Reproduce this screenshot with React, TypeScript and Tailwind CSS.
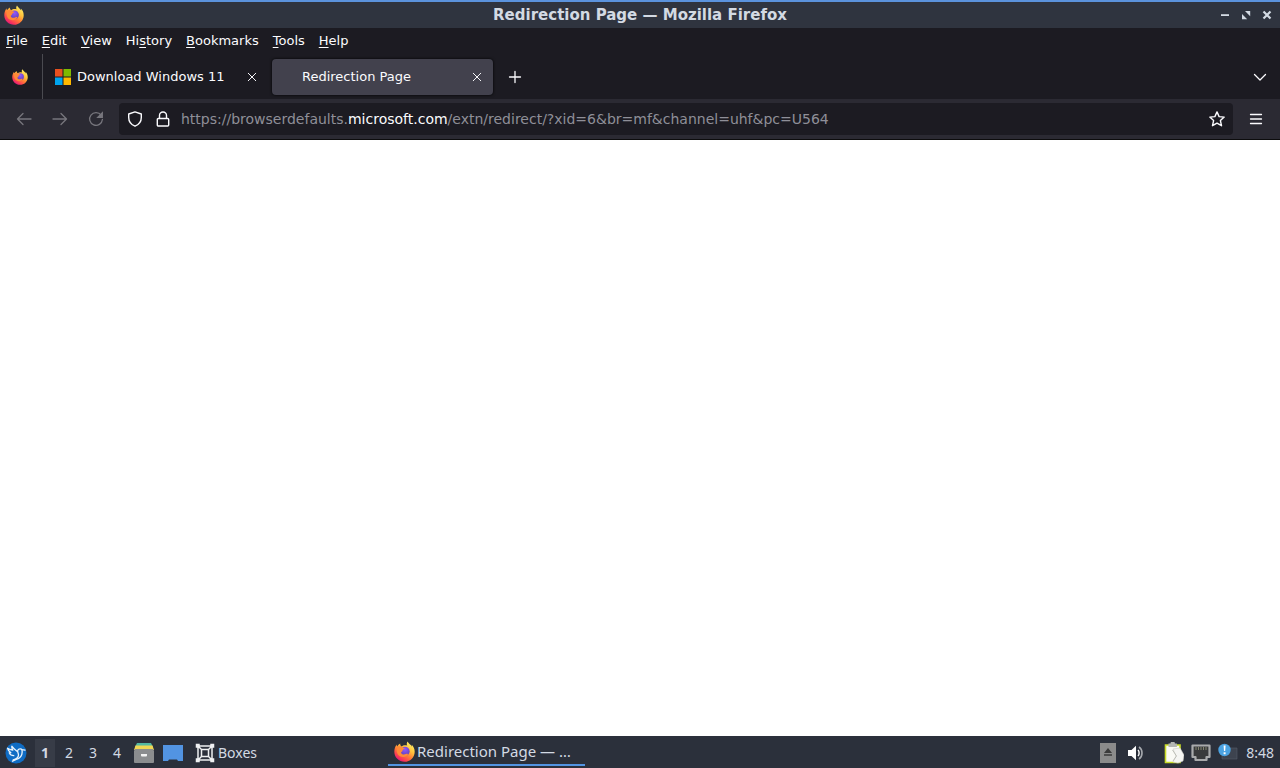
import React from 'react';

function FirefoxLogo({ className, id }: { className: string; id: string }) {
  return (
    <svg viewBox="0 0 20 20" className={className} aria-hidden="true">
      <defs>
        <linearGradient id={`${id}-flame`} x1="0.85" y1="0.05" x2="0.25" y2="0.95">
          <stop offset="0" stopColor="#fff36b" />
          <stop offset="0.35" stopColor="#ffc23c" />
          <stop offset="0.62" stopColor="#ff7a35" />
          <stop offset="0.85" stopColor="#fa3c55" />
          <stop offset="1" stopColor="#e3187a" />
        </linearGradient>
        <radialGradient id={`${id}-globe`} cx="0.5" cy="0.3" r="0.8">
          <stop offset="0" stopColor="#9059ff" />
          <stop offset="1" stopColor="#5b3cab" />
        </radialGradient>
      </defs>
      <path
        d="M13 0.4c-.9 1.3-1.1 2.7-.4 3.9C10 3.8 8.500 4.200 7.300 5.200 6.300 4.700 5.800 3.600 5.900 2.400 4.700 3.100 3.700 4 3 5.200 2.600 4.700 2.500 4 2.600 3.300 1.100 5 .3 7.800.3 10.300.3 15.700 4.700 19.800 10 19.800s9.700-4.200 9.700-9.600c0-3-1.200-5.300-2.900-6.700.3.8.4 1.400.4 2C16.200 3.300 13.800 2.500 13 .4Z"
        fill={`url(#${id}-flame)`}
      />
      <circle cx="10.500" cy="9.800" r="4.400" fill={`url(#${id}-globe)`} />
      <path
        d="M2.800 6.200c1.200-1.200 3-1.300 4.300-.8 1.200.3 1.600 1.200 3.200 1.300.2.900-1.600 1.200-2.100 2.100-.2 1.100-.7 1.600-1.600 2.100.6 1.900 2.700 2.400 4.600 1.500 1-.4 1.800-.4 2.200.2-1.100 2.200-4.200 3.300-7 2.200C3.200 13.600 2 10 2.800 6.200Z"
        fill="#ff8a38"
      />
    </svg>
  );
}

function MicrosoftLogo() {
  return (
    <svg viewBox="0 0 16 16" className="size-4" aria-hidden="true">
      <path fill="#e8501f" d="M0 0h7.500v7.500H0z" />
      <path fill="#7fba00" d="M8.500 0H16v7.500H8.500z" />
      <path fill="#00a4ef" d="M0 8.500h7.500V16H0z" />
      <path fill="#ffb900" d="M8.500 8.500H16V16H8.500z" />
    </svg>
  );
}

function Stroke({
  d,
  className,
  width = 1.3,
}: {
  d: string;
  className: string;
  width?: number;
}) {
  return (
    <svg
      viewBox="0 0 16 16"
      className={className}
      fill="none"
      stroke="currentColor"
      strokeWidth={width}
      strokeLinecap="round"
      strokeLinejoin="round"
      aria-hidden="true"
    >
      <path d={d} />
    </svg>
  );
}

const menus = [
  ['', 'F', 'ile'],
  ['', 'E', 'dit'],
  ['', 'V', 'iew'],
  ['Hi', 's', 'tory'],
  ['', 'B', 'ookmarks'],
  ['', 'T', 'ools'],
  ['', 'H', 'elp'],
];

function TitleBar() {
  return (
    <header className="grid h-7 grid-cols-[1fr_auto_1fr] items-center border-t-2 border-[#5b93dd] bg-[#2f343f] text-[#d3dae3]">
      <FirefoxLogo id="title" className="ml-1 size-5" />
      <h1 className="text-[15px] leading-6 font-bold">Redirection Page — Mozilla Firefox</h1>
      <div className="flex items-center justify-end gap-[9px] pr-[7px]">
        <button aria-label="Minimize" className="size-3">
          <svg viewBox="0 0 12 12" className="size-3">
            <path d="M2 5.200h8v1.800H2z" fill="currentColor" />
          </svg>
        </button>
        <button aria-label="Restore" className="size-3">
          <svg viewBox="0 0 12 12" className="size-3" fill="currentColor">
            <path d="M5 2h5.200v5.200zM2 5v5.200h5.200z" />
          </svg>
        </button>
        <button aria-label="Close" className="size-3">
          <svg viewBox="0 0 12 12" className="size-3">
            <path d="m2.500 2.500 7 7m0-7-7 7" stroke="currentColor" strokeWidth="2.200" />
          </svg>
        </button>
      </div>
    </header>
  );
}

function MenuBar() {
  return (
    <nav className="flex h-[26px] items-center gap-3.5 px-1.5 text-[13px] leading-5">
      {menus.map(([before, key, after]) => (
        <button key={before + key + after}>
          {before}
          <span className="underline underline-offset-2">{key}</span>
          {after}
        </button>
      ))}
    </nav>
  );
}

function TabStrip() {
  return (
    <div className="flex h-[45px] items-center text-[13px] leading-5" role="tablist">
      <button
        role="tab"
        aria-label="Pinned tab"
        className="flex h-full w-[43px] items-center justify-center border-r border-[#4a4a50] pr-0.5"
      >
        <FirefoxLogo id="pinned" className="size-4" />
      </button>
      <div className="flex h-9 w-[229px] items-center pr-3.5 pl-3">
        <button role="tab" className="flex flex-1 items-center gap-1.5">
          <MicrosoftLogo />
          Download Windows 11
        </button>
        <button aria-label="Close Download Windows 11">
          <Stroke className="size-3" d="m3 3 10 10M13 3 3 13" />
        </button>
      </div>
      <div className="flex h-9 w-[221px] items-center rounded-sm bg-[#42414d] pr-2.5 pl-[30px] shadow-[0_0_3px_#000]">
        <button role="tab" aria-selected="true" className="flex-1 text-left">
          Redirection Page
        </button>
        <button aria-label="Close Redirection Page">
          <Stroke className="size-3" d="m3 3 10 10M13 3 3 13" />
        </button>
      </div>
      <button aria-label="New tab" className="ml-3.5">
        <Stroke className="size-4" d="M8 2.500v11M2.500 8h11" />
      </button>
      <button aria-label="List all tabs" className="mr-3 ml-auto">
        <Stroke className="size-4" d="m2.500 5.500 5.500 5.500 5.500-5.500" />
      </button>
    </div>
  );
}

function NavBar() {
  return (
    <div className="flex h-[41px] items-center border-b border-b-[#0c0c0d] bg-[#2b2a33] pl-4 text-[#fbfbfe]">
      <div className="flex gap-5 text-[#77767d]">
        <button aria-label="Back">
          <Stroke className="size-4" d="M15 8H1.500M7 2.500 1.500 8 7 13.500" />
        </button>
        <button aria-label="Forward">
          <Stroke className="size-4" d="M1 8h13.500M9 2.500 14.500 8 9 13.500" />
        </button>
        <button aria-label="Reload">
          <svg viewBox="0 0 16 16" className="size-4" fill="none" stroke="currentColor" strokeWidth="1.300">
            <path d="M13.200 4.200A6.400 6.400 0 1 0 14.400 8.500" strokeLinecap="round" />
            <path d="M14.300 1.800v4.500H9.800z" fill="currentColor" />
          </svg>
        </button>
      </div>
      <div className="ml-[15px] flex h-8 flex-1 items-center rounded-sm bg-[#1c1b22] px-2">
        <button aria-label="Tracking protection">
          <Stroke
            className="size-4"
            width={1.4}
            d="M8 .9 14.300 3v3.500c0 3.800-2.200 7-6.300 8.700C3.900 13.500 1.700 10.300 1.700 6.500V3Z"
          />
        </button>
        <button aria-label="Connection secure" className="ml-3">
          <Stroke
            className="size-4"
            width={1.4}
            d="M4.500 7.500V4.500a3.500 3.500 0 0 1 7 0v3M3.300 7.500h9.400a1 1 0 0 1 1 1v5.500a1 1 0 0 1-1 1H3.300a1 1 0 0 1-1-1V8.500a1 1 0 0 1 1-1Z"
          />
        </button>
        <a
          href="https://browserdefaults.microsoft.com/extn/redirect/?xid=6&br=mf&channel=uhf&pc=U564"
          className="ml-2.5 flex-1 text-[#8f8f98]"
        >
          https://browserdefaults.<span className="text-[#fbfbfe]">microsoft.com</span>
          /extn/redirect/?xid=6&amp;br=mf&amp;channel=uhf&amp;pc=U564
        </a>
        <button aria-label="Bookmark this page">
          <Stroke
            className="size-4"
            width={1.4}
            d="m8 .9 2.100 4.700 5.100.5-3.800 3.500 1.100 5.100L8 12.100l-4.500 2.600 1.100-5.100L.8 6.100l5.100-.5Z"
          />
        </button>
      </div>
      <button aria-label="Open application menu" className="mr-4 ml-[15px]">
        <Stroke className="size-4" d="M2.500 3.500h11M2.500 8h11M2.500 12.500h11" />
      </button>
    </div>
  );
}

function Taskbar() {
  return (
    <footer className="flex h-8 items-center bg-[#2b303b] pt-px font-['Noto_Sans',sans-serif] text-[#d3dae3]">
      <button aria-label="Application menu" className="ml-[5px]">
        <svg viewBox="0 0 22 22" className="size-[22px]">
          <circle cx="11" cy="11" r="10.500" fill="#0f6cc4" />
          <g fill="none" stroke="#e9f3fc" strokeWidth="1.300" strokeLinecap="round" strokeLinejoin="round">
            <path d="M12.300 9.500C10 7.800 8 6.200 6.800 4.200c-.2 1.600.2 2.900 1 4C6 7.800 4 7.200 2.500 6.200c.4 2 1.600 3.500 3.400 4.500l-1.700.1c.9 1.900 2.500 2.900 4.600 2.900" />
            <path d="M20 8.200l-3-.5c-.6-1.200-3.300-1.200-4.200.6-.6 1.600.7 2.900.7 4.700 0 2.300-2.200 4-5.300 4.900" />
            <path d="M17 7.900c.3 1.500.3 3-.2 4.600-.9 2.900-3.200 4.200-5.600 4.800l-3.700 1.900" />
          </g>
        </svg>
      </button>
      <div className="ml-2 flex text-sm">
        <button className="h-7 w-5 bg-[#373c47] font-bold">1</button>
        <button className="ml-1 h-7 w-5">2</button>
        <button className="ml-1 h-7 w-5">3</button>
        <button className="ml-1 h-7 w-5">4</button>
      </div>
      <button aria-label="File manager" className="ml-[7px]">
        <svg viewBox="0 0 20 20" className="size-5">
          <path d="M3 0h14l2 4H1z" fill="#53b8a2" />
          <path d="M1.500 2.500h17L20 7H0z" fill="#f0d653" />
          <path d="M1 6h18l1 2V19a1 1 0 0 1-1 1H1a1 1 0 0 1-1-1V8z" fill="#8b8d8f" />
          <path d="M7 11h6v1.500a1 1 0 0 1-1 1H8a1 1 0 0 1-1-1z" fill="#f3f3f3" />
        </svg>
      </button>
      <button aria-label="Show desktop" className="ml-[9px]">
        <svg viewBox="0 0 20 18" className="h-[18px] w-5">
          <path d="M0 1h20v16h-5l-1-1.500H6L5 17H0z" fill="#5294e2" />
        </svg>
      </button>
      <button className="ml-3 flex w-[184px] items-center gap-[3px] text-sm">
        <svg viewBox="0 0 20 20" className="size-5" fill="none" stroke="#eef0f2" strokeWidth="1.500">
          <path d="M3 3h14v14H3zM6.500 6.500h7v7h-7zM3 3l3.500 3.500M17 3l-3.500 3.500M3 17l3.500-3.500M17 17l-3.500-3.500" />
          <path d="M1.500 1.500h2.500v2.500H1.500zM16 1.500h2.500v2.500H16zM1.500 16h2.500v2.500H1.500zM16 16h2.500v2.500H16z" fill="#eef0f2" />
        </svg>
        Boxes
      </button>
      <button className="ml-[9px] flex h-[29px] w-[197px] items-center gap-0.5 self-start border-b-2 border-[#5294e2] pt-0.5 pl-1.5 text-[15px]">
        <FirefoxLogo id="task" className="size-[21px]" />
        Redirection Page — …
      </button>
      <div className="ml-auto flex items-center pr-1.5">
        <button aria-label="Removable media">
          <svg viewBox="0 0 16 20" className="h-5 w-4">
            <path d="M0 0h16v20H0z" fill="#8b8b8b" />
            <path d="m8 5 4 5H4zM4 11.200h8v1.500H4z" fill="#3b3b3b" />
          </svg>
        </button>
        <button aria-label="Volume" className="ml-3">
          <svg viewBox="0 0 16 16" className="size-4">
            <path d="M0 5h3.500L8 .8v14.400L3.500 11H0z" fill="#fff" />
            <path d="M10 5c1.500 1.500 1.500 4.500 0 6" fill="none" stroke="#fff" strokeWidth="1.400" />
            <path d="M11 2c4 2.500 4 9.500 0 12" fill="none" stroke="#a5a8ad" strokeWidth="1.600" />
          </svg>
        </button>
        <button aria-label="Clipboard" className="ml-5">
          <svg viewBox="0 0 20 22" className="h-[22px] w-5">
            <path d="M1.500 3h14.500v17.500H1.500z" fill="#fafaf5" stroke="#c9dc28" strokeWidth="1.600" />
            <path d="M4.500 1.500h2a2.200 2 0 0 1 4.400 0h2v3.500H4.500z" fill="#b4b6b4" />
            <path d="m9 7 7-1 4 7-1 6-5 2-5-1 3-6z" fill="#f5f5f2" stroke="#d0d0ca" strokeWidth=".6" />
            <path d="m8.500 8 4 6-3.500 5" fill="none" stroke="#b4b5ad" strokeWidth=".8" />
          </svg>
        </button>
        <button aria-label="Network" className="ml-[7px]">
          <svg viewBox="0 0 20 18" className="h-[18px] w-5">
            <path d="M1.500 1.500h17v11.500h-3v3h-11v-3h-3z" fill="#393a3c" stroke="#a9aaac" strokeWidth="2.200" strokeLinejoin="round" />
            <path d="M5 3v3M7.500 3v3M10 3v3M12.500 3v3M15 3v3" stroke="#82836f" />
          </svg>
        </button>
        <button aria-label="Notifications" className="ml-[7px]">
          <svg viewBox="0 0 20 20" className="size-5">
            <path d="M4 5h15v11H4z" fill="#3d434f" stroke="#565d69" strokeWidth=".6" />
            <circle cx="6.500" cy="7" r="6.200" fill="#4ba3e3" />
            <path d="M5.600 2.500h2L7.200 8H6zM5.600 9.300h2v2h-2z" fill="#fff" />
          </svg>
        </button>
        <time className="ml-2 text-sm">8:48</time>
      </div>
    </footer>
  );
}

export default function App() {
  return (
    <div className="flex min-h-screen flex-col bg-[#1c1b22] font-['DejaVu_Sans',sans-serif] text-sm text-[#fbfbfe]">
      <TitleBar />
      <MenuBar />
      <TabStrip />
      <NavBar />
      <main className="flex-1 bg-white" />
      <Taskbar />
    </div>
  );
}
